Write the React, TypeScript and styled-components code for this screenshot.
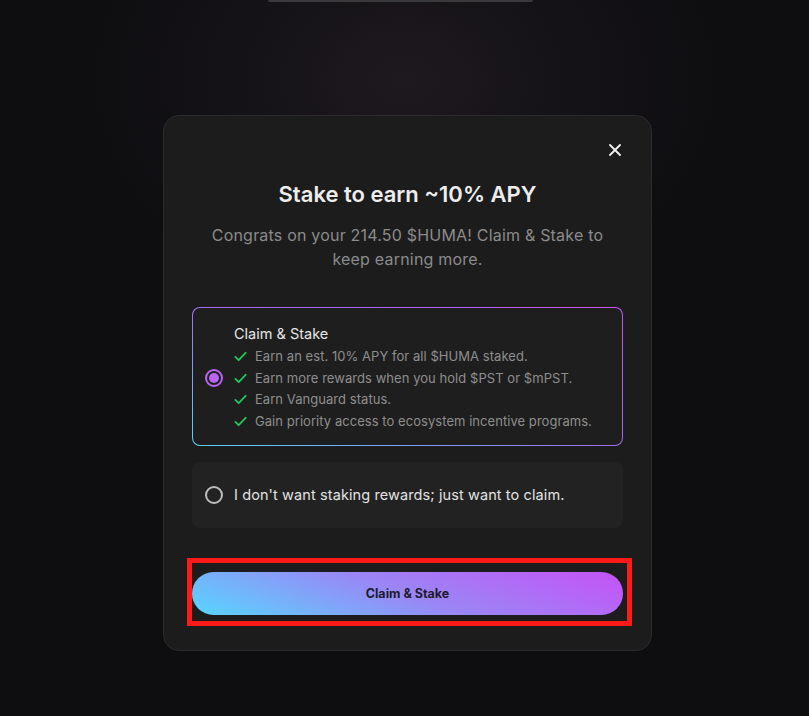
import styled, { createGlobalStyle } from 'styled-components';

const GlobalStyle = createGlobalStyle`
  html, body {
    margin: 0;
    padding: 0;
    background: #0e0d10;
  }
  body {
    font-family: Inter, "Noto Sans", "Liberation Sans", sans-serif;
    -webkit-font-smoothing: antialiased;
  }
  * { box-sizing: border-box; }
`;

const Page = styled.div`
  min-height: 716px;
  background: radial-gradient(ellipse 320px 240px at 404px 80px, #1e191e 0%, #141216 55%, #0e0d10 100%);
  display: flex;
  flex-direction: column;
  align-items: center;
  padding-left: 6px;
`;

const TopEdge = styled.div`
  width: 265px;
  height: 2px;
  margin-left: -14px;
  background: #3a3a3c;
  border-radius: 0 0 2px 2px;
`;

const Modal = styled.div`
  margin-top: 113px;
  width: 489px;
  background: #1c1c1c;
  border: 1px solid #2b2b2b;
  border-radius: 16px;
  padding: 28px 28px 24px;
  display: flex;
  flex-direction: column;
`;

const Header = styled.div`
  display: flex;
  justify-content: flex-end;
  height: 12px;
  margin-right: 2px;
`;

const CloseButton = styled.button`
  border: none;
  background: none;
  padding: 0;
  width: 12px;
  height: 12px;
  cursor: pointer;
  color: #f2f2f2;
  display: flex;
`;

const Title = styled.h2`
  margin: 24px 0 0;
  font-size: 22px;
  line-height: 28px;
  font-weight: 600;
  color: #ededed;
  text-align: center;
`;

const Subtitle = styled.p`
  margin: 15px auto 0;
  max-width: 410px;
  font-size: 16px;
  line-height: 24px;
  letter-spacing: 0.2px;
  color: #8b8b8b;
  text-align: center;
`;

const Options = styled.div`
  margin-top: 36px;
  display: flex;
  flex-direction: column;
  gap: 16px;
`;

const Option = styled.div<{ $active?: boolean }>`
  display: flex;
  align-items: center;
  gap: 11px;
  border-radius: 8px;
  border: 1px solid transparent;
  padding: ${(p) => (p.$active ? '16px 12px 13px' : '22px 12px')};
  background: ${(p) =>
    p.$active
      ? 'linear-gradient(#1e1e1e, #1e1e1e) padding-box, linear-gradient(to bottom left, #c455f7 0%, #a070f0 50%, #5ad4fe 100%) border-box'
      : '#222222'};
  cursor: pointer;
`;

const Radio = styled.span<{ $checked?: boolean }>`
  flex: none;
  width: 18px;
  height: 18px;
  border-radius: 50%;
  border: 2px solid ${(p) => (p.$checked ? '#b865f2' : '#bdbdbd')};
  display: flex;
  align-items: center;
  justify-content: center;

  &::after {
    content: '';
    width: 10px;
    height: 10px;
    border-radius: 50%;
    background: #b865f2;
    display: ${(p) => (p.$checked ? 'block' : 'none')};
  }
`;

const OptionBody = styled.div`
  display: flex;
  flex-direction: column;
`;

const OptionTitle = styled.div`
  font-size: 14.5px;
  line-height: 20px;
  font-weight: 400;
  color: #e6e6e6;
`;

const Perks = styled.ul`
  list-style: none;
  margin: 2px 0 0;
  padding: 0;
`;

const Perk = styled.li`
  display: flex;
  align-items: center;
  gap: 8px;
  font-size: 13px;
  line-height: 21.6px;
  letter-spacing: 0.05px;
  color: #8e8e8e;
`;

const Check = styled.svg`
  flex: none;
  width: 13px;
  height: 13px;
  color: #22c55e;
`;

const PlainLabel = styled.div`
  font-size: 14.5px;
  line-height: 20px;
  font-weight: 400;
  letter-spacing: 0.1px;
  color: #e2e2e2;
`;

const Highlight = styled.div`
  margin: 30px -9px 0 -5px;
  border: 5px solid #ff1a1a;
  padding: 9px 4px 6px 0;
`;

const StakeButton = styled.button`
  width: 100%;
  height: 43px;
  border: none;
  border-radius: 999px;
  background: linear-gradient(200deg, #c652f6 0%, #9a86f5 50%, #57d6fe 100%);
  color: #1d1b2e;
  font-family: inherit;
  font-size: 12.5px;
  font-weight: 700;
  cursor: pointer;
`;

const perks = [
  'Earn an est. 10% APY for all $HUMA staked.',
  'Earn more rewards when you hold $PST or $mPST.',
  'Earn Vanguard status.',
  'Gain priority access to ecosystem incentive programs.',
];

export default function App() {
  return (
    <>
      <GlobalStyle />
      <Page>
        <TopEdge />
        <Modal>
          <Header>
            <CloseButton aria-label="Close">
              <svg width="12" height="12" viewBox="0 0 12 12" fill="none">
                <path d="M1 1L11 11M11 1L1 11" stroke="currentColor" strokeWidth="1.8" strokeLinecap="round" />
              </svg>
            </CloseButton>
          </Header>
          <Title>Stake to earn ~10% APY</Title>
          <Subtitle>Congrats on your 214.50 $HUMA! Claim &amp; Stake to keep earning more.</Subtitle>
          <Options>
            <Option $active>
              <Radio $checked />
              <OptionBody>
                <OptionTitle>Claim &amp; Stake</OptionTitle>
                <Perks>
                  {perks.map((p) => (
                    <Perk key={p}>
                      <Check viewBox="0 0 14 14" fill="none">
                        <path d="M1.5 7.5L5 11L12.5 3" stroke="currentColor" strokeWidth="2" strokeLinecap="round" strokeLinejoin="round" />
                      </Check>
                      {p}
                    </Perk>
                  ))}
                </Perks>
              </OptionBody>
            </Option>
            <Option>
              <Radio />
              <PlainLabel>I don't want staking rewards; just want to claim.</PlainLabel>
            </Option>
          </Options>
          <Highlight>
            <StakeButton>Claim &amp; Stake</StakeButton>
          </Highlight>
        </Modal>
      </Page>
    </>
  );
}
